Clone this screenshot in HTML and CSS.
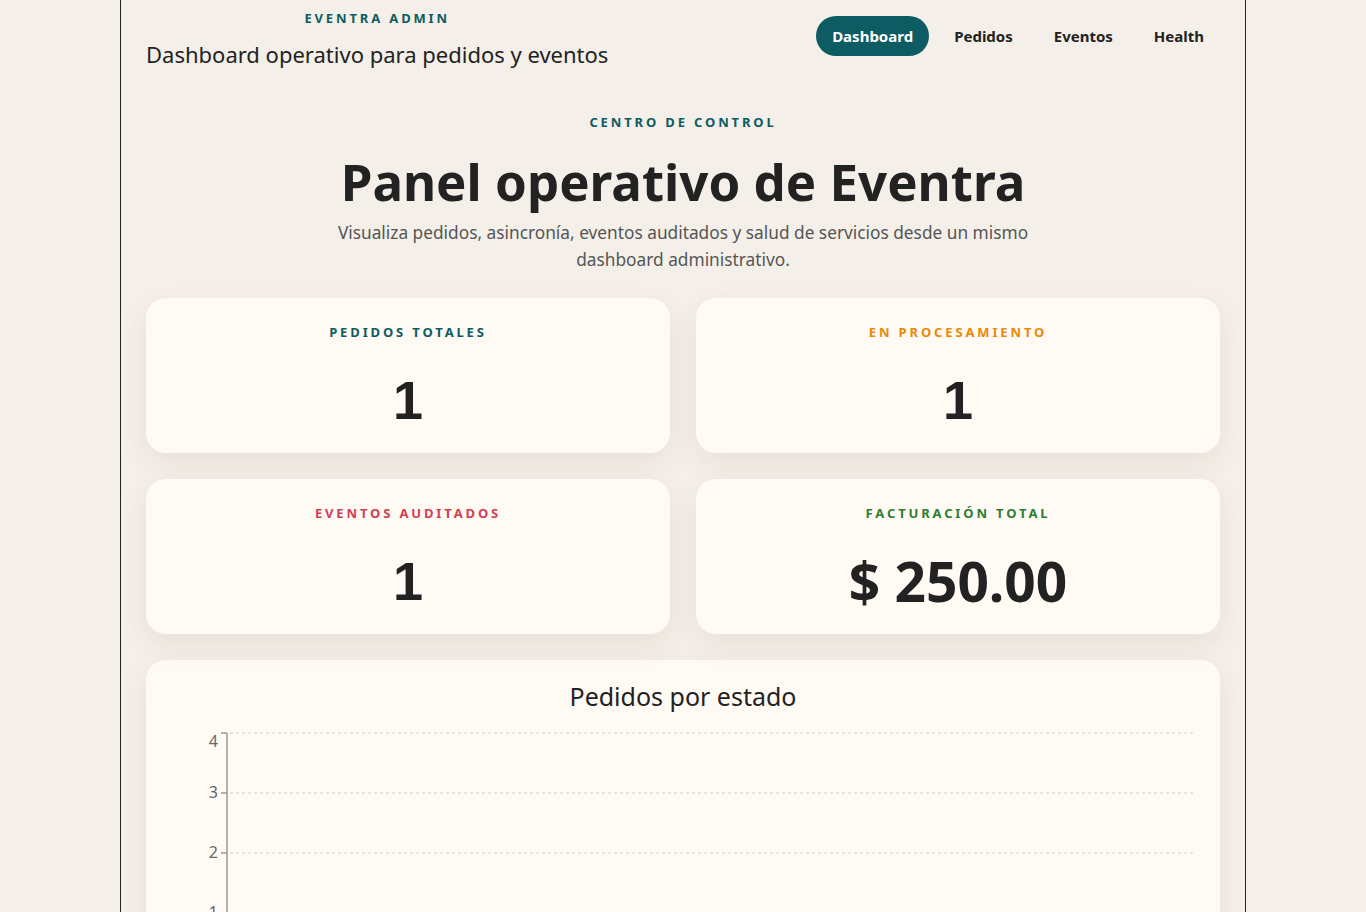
FILE: index.html
```html
<!DOCTYPE html>
<html lang="es">
<head>
<meta charset="utf-8">
<title>Eventra Admin</title>
<link rel="stylesheet" href="styles.css">
</head>
<body>
<div class="shell">
  <header class="topbar">
    <div class="brand">
      <div class="brand-kicker">EVENTRA ADMIN</div>
      <div class="brand-title">Dashboard operativo para pedidos y eventos</div>
    </div>
    <nav class="nav">
      <a class="nav-link active" href="#">Dashboard</a>
      <a class="nav-link" href="#">Pedidos</a>
      <a class="nav-link" href="#">Eventos</a>
      <a class="nav-link" href="#">Health</a>
    </nav>
  </header>

  <section class="hero">
    <div class="hero-kicker">CENTRO DE CONTROL</div>
    <h1 class="hero-title">Panel operativo de Eventra</h1>
    <p class="hero-text">Visualiza pedidos, asincronía, eventos auditados y salud de servicios desde un mismo dashboard administrativo.</p>
  </section>

  <section class="stats">
    <div class="stat-card">
      <div class="stat-label teal">PEDIDOS TOTALES</div>
      <div class="stat-value num">1</div>
    </div>
    <div class="stat-card">
      <div class="stat-label orange">EN PROCESAMIENTO</div>
      <div class="stat-value num">1</div>
    </div>
    <div class="stat-card">
      <div class="stat-label red">EVENTOS AUDITADOS</div>
      <div class="stat-value num">1</div>
    </div>
    <div class="stat-card">
      <div class="stat-label green">FACTURACIÓN TOTAL</div>
      <div class="stat-value">$ 250.00</div>
    </div>
  </section>

  <section class="chart-card">
    <h2 class="chart-title">Pedidos por estado</h2>
    <svg class="chart" width="1026" height="260" viewBox="0 0 1026 260">
      <g class="grid">
        <line x1="60" y1="13" x2="1026" y2="13"/>
        <line x1="60" y1="73" x2="1026" y2="73"/>
        <line x1="60" y1="133" x2="1026" y2="133"/>
        <line x1="60" y1="193" x2="1026" y2="193"/>
      </g>
      <g class="axis">
        <line x1="57" y1="13" x2="57" y2="260"/>
        <line x1="51" y1="13" x2="57" y2="13"/>
        <line x1="51" y1="73" x2="57" y2="73"/>
        <line x1="51" y1="133" x2="57" y2="133"/>
        <line x1="51" y1="193" x2="57" y2="193"/>
      </g>
      <g class="ticks">
        <text x="48" y="27">4</text>
        <text x="48" y="78">3</text>
        <text x="48" y="138">2</text>
        <text x="48" y="198">1</text>
      </g>
    </svg>
  </section>
</div>
</body>
</html>
```

FILE: styles.css
```css
* { box-sizing: border-box; }
html, body {
  margin: 0;
  padding: 0;
  background: #f4f0e9;
  color: #222;
  font-family: "Noto Sans", "Open Sans", sans-serif;
}
.shell {
  width: 1126px;
  margin: 0 auto;
  min-height: 912px;
  border-left: 1px solid #222;
  border-right: 1px solid #222;
  padding: 0 25px;
}
.topbar {
  display: flex;
  justify-content: space-between;
  align-items: flex-start;
  padding-top: 8px;
}
.brand {
  text-align: center;
}
.brand-kicker {
  font-size: 13px;
  line-height: 20px;
  font-weight: 700;
  letter-spacing: 0.22em;
  color: #0e5c63;
}
.brand-title {
  margin-top: 11px;
  font-size: 22px;
  line-height: 30px;
}
.nav {
  display: flex;
  gap: 9px;
  margin-top: 8px;
}
.nav-link {
  display: block;
  padding: 0 16px;
  height: 40px;
  line-height: 40px;
  border-radius: 20px;
  font-size: 15px;
  font-weight: 700;
  color: #222;
  text-decoration: none;
}
.nav-link.active {
  background: #0e5c63;
  color: #fff;
}
.hero {
  text-align: center;
  margin-top: 43px;
}
.hero-kicker {
  font-size: 13px;
  line-height: 20px;
  font-weight: 700;
  letter-spacing: 0.22em;
  color: #0e5c63;
}
.hero-title {
  margin: 17px 0 0;
  font-size: 51px;
  line-height: 64px;
  font-weight: 700;
  color: #222;
}
.hero-text {
  margin: 6px auto 0;
  max-width: 700px;
  font-size: 17.3px;
  line-height: 27px;
  color: #555;
}
.stats {
  margin-top: 25px;
  display: grid;
  grid-template-columns: 1fr 1fr;
  gap: 26px;
}
.stat-card, .chart-card {
  background: #fffaf3;
  border-radius: 20px;
  box-shadow: 0 10px 30px rgba(60, 45, 20, 0.08);
}
.stat-card {
  height: 155px;
  text-align: center;
  padding-top: 24px;
}
.stat-label {
  font-size: 13px;
  line-height: 20px;
  font-weight: 700;
  letter-spacing: 0.22em;
}
.teal { color: #0e5c63; }
.orange { color: #e8890c; }
.red { color: #d04055; }
.green { color: #2e7d32; }
.stat-value {
  margin-top: 26px;
  font-size: 55px;
  line-height: 64px;
  font-weight: 700;
  color: #222;
}
.stat-value.num {
  font-family: "Liberation Sans", Arial, sans-serif;
  font-size: 54px;
}
.chart-card {
  margin-top: 26px;
  padding: 18px 24px 0;
  height: 400px;
}
.chart-title {
  margin: 0;
  text-align: center;
  font-size: 25px;
  line-height: 36px;
  font-weight: 400;
  color: #222;
}
.chart {
  display: block;
  margin-top: 6px;
}
.grid line {
  stroke: #ddd;
  stroke-width: 1.5;
  stroke-dasharray: 3 3;
}
.axis line {
  stroke: #999;
  stroke-width: 1.5;
}
.ticks text {
  font-family: "Noto Sans", sans-serif;
  font-size: 16px;
  fill: #666;
  text-anchor: end;
}
```
